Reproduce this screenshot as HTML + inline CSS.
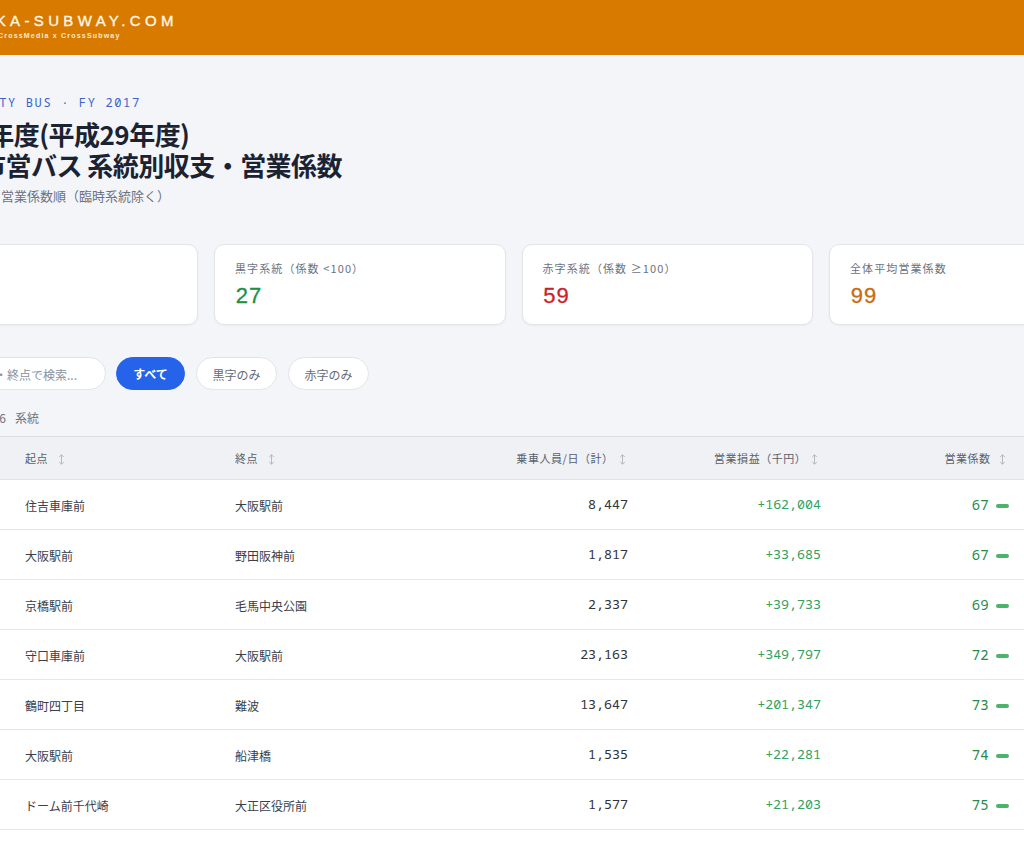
<!DOCTYPE html>
<html lang="ja">
<head>
<meta charset="utf-8">
<style>
*{box-sizing:border-box;margin:0;padding:0}
html,body{width:1024px;height:843px;overflow:hidden}
body{background:#f3f5f9;font-family:"Noto Sans CJK JP","Liberation Sans",sans-serif;color:#1c2433;position:relative}
.abs{position:absolute;white-space:nowrap}
#hdr{position:absolute;left:0;top:0;width:1024px;height:55px;background:#d87a00}
#logo{left:-49px;top:11px;font-family:"Liberation Sans",sans-serif;font-size:15px;letter-spacing:4.35px;-webkit-text-stroke:.35px #fff7e6;color:#fff7e6;line-height:20px}
#logosub{left:-2px;top:30.7px;font-family:"Liberation Sans",sans-serif;font-size:7px;font-weight:bold;letter-spacing:1.2px;color:#ffe9c8;line-height:10px}
#eyebrow{left:-71.6px;top:95px;font-family:"Noto Sans Mono","Liberation Mono",monospace;font-size:12px;letter-spacing:1.65px;color:#3c63c9;line-height:16px}
#title{left:-71px;top:118px;font-size:26px;font-weight:700;letter-spacing:-0.02em;line-height:31px;color:#1b2232}
#sub{left:-65.5px;top:185.5px;font-size:13px;color:#6b7280;line-height:20px}
.card{position:absolute;top:244px;width:291.5px;height:81px;background:#fff;border:1px solid #e3e5ea;border-radius:10px;box-shadow:0 1px 2px rgba(20,30,50,.05)}
.card .lbl{position:absolute;left:20px;top:15px;font-size:11px;letter-spacing:.1em;color:#6b7280;line-height:16px;white-space:nowrap}
.card .val{position:absolute;left:20.8px;top:37px;font-family:"Liberation Sans",sans-serif;font-size:22px;letter-spacing:1px;line-height:28px;-webkit-text-stroke:.3px currentColor}
.chip{position:absolute;top:357px;height:33px;border-radius:17px;font-size:12px;line-height:31px;text-align:center;white-space:nowrap}
.chip.o{background:#fff;border:1px solid #e1e4e9;color:#646b77;line-height:33px}
.chip.on{background:#2563eb;color:#fff;font-weight:700;border:1px solid #2563eb}
#count{left:0;top:409px;font-size:12px;color:#6b7280;line-height:18px}
#cnum{position:absolute;right:-6px;top:0}
#cunit{position:absolute;left:15px;top:0}
#ph{left:-29px;top:365px;font-size:12px;line-height:20px;color:#8a919c}
#table{position:absolute;left:-94px;top:436px;width:1216px;height:420px;background:#fff;border-top:1px solid #dcdee3}
#thead{position:absolute;left:0;top:0;width:100%;height:43px;background:#eff1f5;border-bottom:1px solid #dfe1e6}
.th{position:absolute;top:0;height:42px;display:flex;align-items:center;font-size:11px;letter-spacing:.05em;font-weight:400;color:#59606c;white-space:nowrap}
.th span{line-height:20px}
.si{margin-left:8px;margin-top:2px;display:block}
.row{position:absolute;left:0;width:100%;height:50px;border-bottom:1px solid #e5e7eb}
.td{position:absolute;top:0;line-height:51px;font-size:12px;color:#394049;white-space:nowrap}
.num{font-family:"Noto Sans Mono","Liberation Mono",monospace;line-height:49px;font-size:13.3px;font-weight:370;text-align:right;color:#30343c}
.num.pos{color:#36a05e}
.coef{font-family:"Noto Sans Mono","Liberation Mono",monospace;line-height:49px;font-size:14px;font-weight:420;color:#288a4d;text-align:right}
.bar{position:absolute;top:24px;width:13px;height:4px;border-radius:2px;background:#4cb36b}
</style>
</head>
<body>
<div id="hdr"></div>
<div id="logo" class="abs">OSAKA-SUBWAY.COM</div>
<div id="logosub" class="abs">CrossMedia x CrossSubway</div>

<div id="eyebrow" class="abs">OSAKA CITY BUS · FY 2017</div>
<div id="title" class="abs">2017年度(平成29年度)<br>大阪市営バス 系統別収支・営業係数</div>
<div id="sub" class="abs">全86系統・営業係数順（臨時系統除く）</div>

<div class="card" style="left:-93.5px"><div class="lbl">対象系統数</div><div class="val" style="color:#1b2232">86</div></div>
<div class="card" style="left:214px"><div class="lbl">黒字系統（係数 &lt;100）</div><div class="val" style="color:#1b9047">27</div></div>
<div class="card" style="left:521.5px"><div class="lbl">赤字系統（係数 ≥100）</div><div class="val" style="color:#cc1f2b">59</div></div>
<div class="card" style="left:829px"><div class="lbl">全体平均営業係数</div><div class="val" style="color:#c96c10">99</div></div>

<div class="chip o" style="left:-94px;width:200px"></div><div class="abs" id="ph">起点・終点で検索...</div>
<div class="chip on" style="left:116px;width:69px">すべて</div>
<div class="chip o" style="left:196px;width:81px">黒字のみ</div>
<div class="chip o" style="left:288px;width:81px">赤字のみ</div>

<div id="count" class="abs"><span id="cnum">86</span><span id="cunit">系統</span></div>

<div id="table">
  <div id="thead">
    <div class="th" style="left:119px"><span>起点</span><svg class="si" style="margin-left:9.4px" width="7" height="11" viewBox="0 0 7 11"><path d="M3.5 .8V10.2M1.2 3.1L3.5 .8L5.8 3.1M1.2 7.9L3.5 10.2L5.8 7.9" fill="none" stroke="#aeb3bb" stroke-width=".9"/></svg></div>
    <div class="th" style="left:329px"><span>終点</span><svg class="si" style="margin-left:9.4px" width="7" height="11" viewBox="0 0 7 11"><path d="M3.5 .8V10.2M1.2 3.1L3.5 .8L5.8 3.1M1.2 7.9L3.5 10.2L5.8 7.9" fill="none" stroke="#aeb3bb" stroke-width=".9"/></svg></div>
    <div class="th" style="right:496.2px"><span>乗車人員/日（計）</span><svg class="si" style="margin-left:5.2px" width="7" height="11" viewBox="0 0 7 11"><path d="M3.5 .8V10.2M1.2 3.1L3.5 .8L5.8 3.1M1.2 7.9L3.5 10.2L5.8 7.9" fill="none" stroke="#aeb3bb" stroke-width=".9"/></svg></div>
    <div class="th" style="right:303.8px"><span>営業損益（千円）</span><svg class="si" style="margin-left:4.8px" width="7" height="11" viewBox="0 0 7 11"><path d="M3.5 .8V10.2M1.2 3.1L3.5 .8L5.8 3.1M1.2 7.9L3.5 10.2L5.8 7.9" fill="none" stroke="#aeb3bb" stroke-width=".9"/></svg></div>
    <div class="th" style="right:116.4px"><span>営業係数</span><svg class="si" width="7" height="11" viewBox="0 0 7 11"><path d="M3.5 .8V10.2M1.2 3.1L3.5 .8L5.8 3.1M1.2 7.9L3.5 10.2L5.8 7.9" fill="none" stroke="#aeb3bb" stroke-width=".9"/></svg></div>
  </div>
  <div class="row" style="top:43px">
    <div class="td" style="left:119px">住吉車庫前</div><div class="td" style="left:329px">大阪駅前</div>
    <div class="td num" style="right:494px">8,447</div><div class="td num pos" style="right:301px">+162,004</div>
    <div class="td coef" style="right:133.4px">67</div><div class="bar" style="left:1090px"></div>
  </div>
  <div class="row" style="top:93px">
    <div class="td" style="left:119px">大阪駅前</div><div class="td" style="left:329px">野田阪神前</div>
    <div class="td num" style="right:494px">1,817</div><div class="td num pos" style="right:301px">+33,685</div>
    <div class="td coef" style="right:133.4px">67</div><div class="bar" style="left:1090px"></div>
  </div>
  <div class="row" style="top:143px">
    <div class="td" style="left:119px">京橋駅前</div><div class="td" style="left:329px">毛馬中央公園</div>
    <div class="td num" style="right:494px">2,337</div><div class="td num pos" style="right:301px">+39,733</div>
    <div class="td coef" style="right:133.4px">69</div><div class="bar" style="left:1090px"></div>
  </div>
  <div class="row" style="top:193px">
    <div class="td" style="left:119px">守口車庫前</div><div class="td" style="left:329px">大阪駅前</div>
    <div class="td num" style="right:494px">23,163</div><div class="td num pos" style="right:301px">+349,797</div>
    <div class="td coef" style="right:133.4px">72</div><div class="bar" style="left:1090px"></div>
  </div>
  <div class="row" style="top:243px">
    <div class="td" style="left:119px">鶴町四丁目</div><div class="td" style="left:329px">難波</div>
    <div class="td num" style="right:494px">13,647</div><div class="td num pos" style="right:301px">+201,347</div>
    <div class="td coef" style="right:133.4px">73</div><div class="bar" style="left:1090px"></div>
  </div>
  <div class="row" style="top:293px">
    <div class="td" style="left:119px">大阪駅前</div><div class="td" style="left:329px">船津橋</div>
    <div class="td num" style="right:494px">1,535</div><div class="td num pos" style="right:301px">+22,281</div>
    <div class="td coef" style="right:133.4px">74</div><div class="bar" style="left:1090px"></div>
  </div>
  <div class="row" style="top:343px">
    <div class="td" style="left:119px">ドーム前千代崎</div><div class="td" style="left:329px">大正区役所前</div>
    <div class="td num" style="right:494px">1,577</div><div class="td num pos" style="right:301px">+21,203</div>
    <div class="td coef" style="right:133.4px">75</div><div class="bar" style="left:1090px"></div>
  </div>
  <div class="row" style="top:393px"></div>
</div>
</body>
</html>
